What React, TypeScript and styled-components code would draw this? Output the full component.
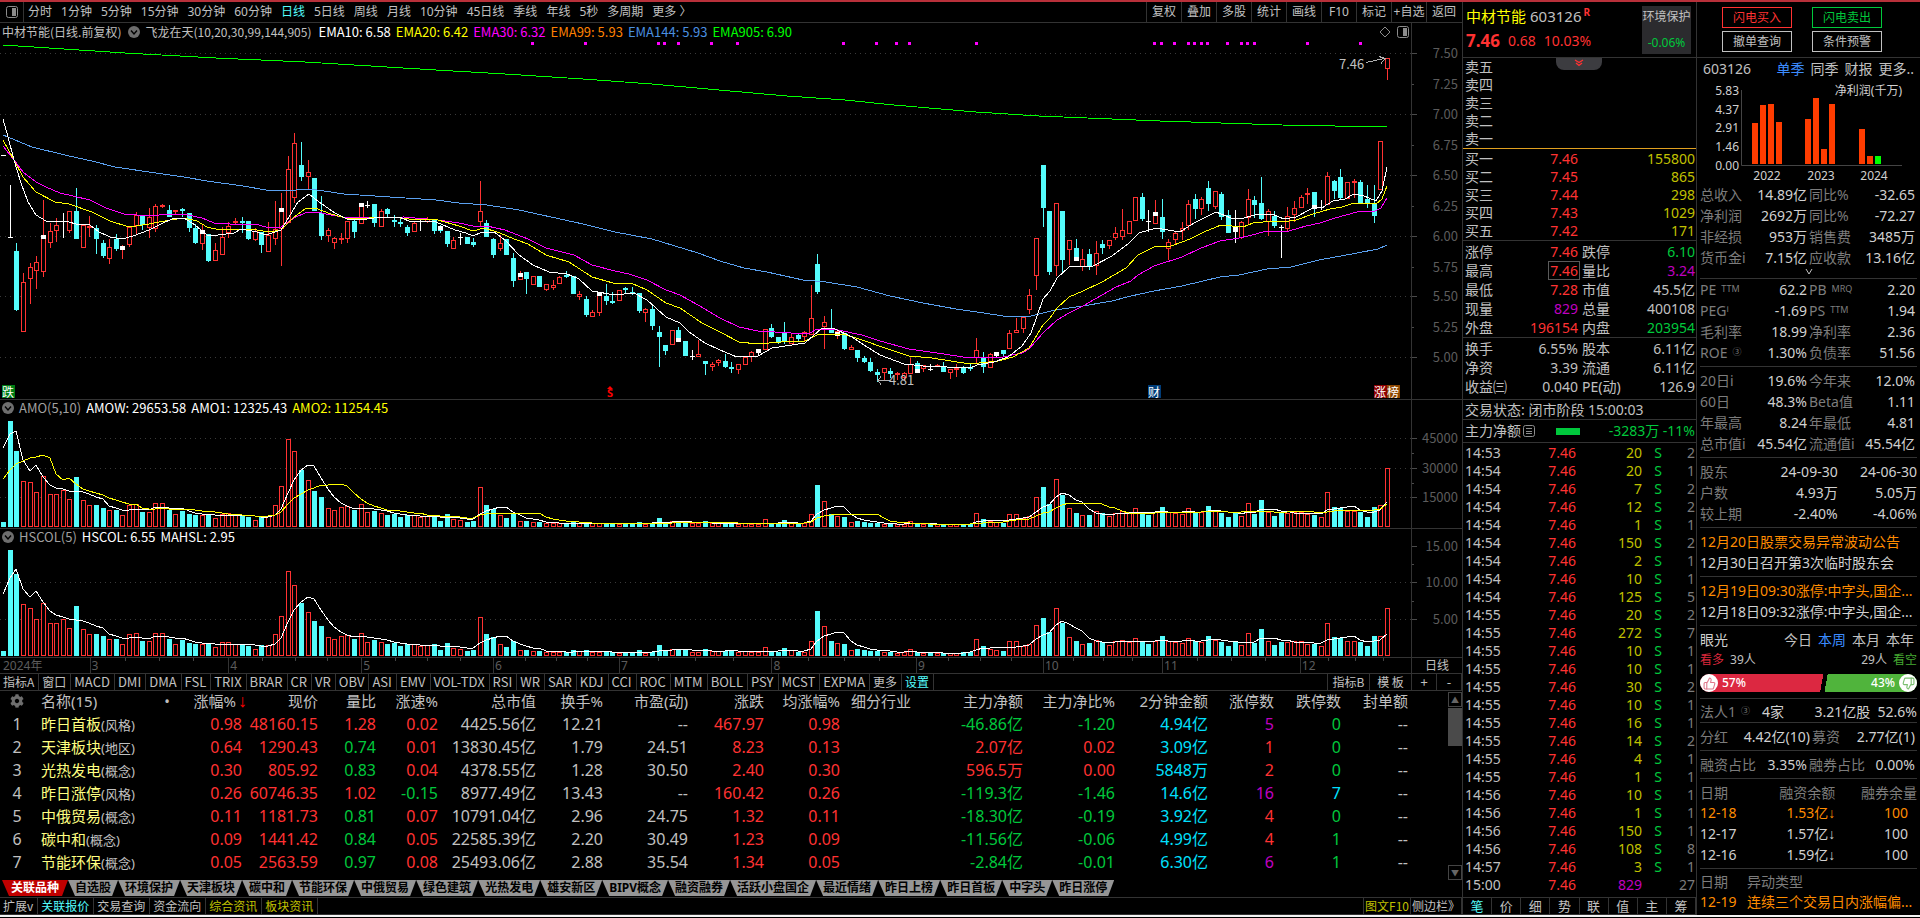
import React from "react";
import styled, { createGlobalStyle, css } from "styled-components";
import { FaCog } from "react-icons/fa";
import { ThumbsUp, ThumbsDown } from "lucide-react";

/* ---------- theme ---------- */

const C = {
  line: "#333333",
  text: "#c0c0c0",
  dim: "#7c7c7c",
  axis: "#5c5c5c",
  red: "#ff3232",
  green: "#00c83c",
  cyan: "#54fcfc",
  sky: "#00e0ff",
  olive: "#c0c000",
  yellow: "#ffff00",
  pale: "#ffff80",
  purple: "#c000c0",
  orange: "#ff8c00",
  blue: "#3c8cff",
  white: "#ffffff",
};
type Tone = keyof typeof C;

const sans = `"Noto Sans", "Noto Sans CJK SC", sans-serif`;
const narrow = `"Noto Sans CJK SC", "Noto Sans", sans-serif`;

const Global = createGlobalStyle`
  * { box-sizing: border-box; }
  body { margin: 0; background: #000; color: ${C.text}; font: 14px/18px ${sans}; }
  button { font: inherit; color: inherit; background: none; border: 0; padding: 0; cursor: pointer; white-space: nowrap; }
  a { color: inherit; text-decoration: none; }
  table { border-collapse: collapse; border-spacing: 0; }
  th { font-weight: 400; }
  td, th { padding: 0; white-space: nowrap; }
`;

/* ---------- chart data ---------- */

const PLOT_W = 1411;
const barX = (i: number) => Math.round(3.2 + 6.62 * i);

type Candle = { kind: string; high: number; top: number; bottom: number; low: number };

// kind, high, body top, body bottom, low (in plot rows); W / w are flat days closing up / down
const CANDLES: Candle[] = `
w 155 155 156 155|w 185 237 238 237|c 243 251 310 311|r 273 282 332 332|r 263 267 279 304|r 256 262 271 289|r 200 237 272 277|r 223 231 243 248|r 218 225 231 242|W 213 221 222 238
r 211 211 231 233|c 188 211 239 239|r 225 225 248 248|r 216 226 228 237|c 225 228 239 254|c 240 243 256 258|r 239 247 259 264|c 234 239 249 251|r 245 247 250 259|r 226 227 245 247
r 212 215 226 235|c 215 216 225 230|r 208 217 228 238|r 204 206 229 232|r 204 205 207 208|c 205 210 217 217|r 210 210 212 214|c 208 209 211 217|c 213 213 228 232|c 224 228 243 244
r 224 232 244 250|c 234 234 261 262|r 243 250 261 261|r 227 237 255 255|r 222 226 233 238|r 218 221 223 225|c 217 221 223 233|c 221 221 239 240|r 228 231 240 241|c 232 232 245 253
r 222 235 252 252|r 201 229 239 245|r 193 210 229 266|r 156 169 223 223|r 133 143 198 203|c 142 165 177 181|r 160 172 177 189|c 178 178 211 211|c 196 213 236 240|r 228 230 236 242
r 237 238 243 249|r 233 238 240 244|r 221 221 239 243|c 218 221 232 238|r 204 206 224 224|W 201 205 206 208|c 204 204 223 227|r 209 211 227 227|c 208 209 214 218|c 215 220 222 227
c 217 222 224 227|c 225 227 233 236|r 222 223 232 232|W 220 221 222 231|r 217 219 222 223|c 219 219 231 234|c 225 227 231 233|c 231 231 244 247|r 237 240 249 249|W 233 237 238 245
c 237 237 244 244|c 238 242 245 247|r 181 211 222 226|c 220 223 237 237|c 238 239 255 258|r 235 243 249 251|c 239 239 255 255|c 253 258 281 287|r 271 275 280 280|c 272 272 279 294
r 276 276 285 285|c 276 276 287 287|r 284 284 290 291|r 280 285 288 290|r 276 277 284 284|c 271 275 277 278|c 276 276 294 294|r 291 294 297 300|c 296 299 315 317|r 310 312 317 317
r 292 294 313 316|c 284 296 301 305|c 292 301 303 304|r 290 290 301 301|c 287 288 290 294|c 287 292 294 295|c 293 293 311 313|r 308 309 313 322|c 304 309 326 330|c 326 332 337 367
c 345 345 351 355|r 330 330 345 345|c 327 330 340 342|c 341 341 356 356|W 350 356 357 360|r 340 354 357 357|c 361 361 364 375|r 362 364 367 371|r 359 360 363 366|c 354 361 367 368
c 362 367 369 373|r 364 364 370 374|r 357 357 365 365|r 351 352 357 362|W 349 350 353 355|r 329 329 350 350|c 324 328 337 338|c 337 337 342 344|c 322 332 341 344|r 333 337 344 344
c 334 335 339 342|r 331 332 337 342|r 285 318 335 335|c 254 264 292 294|r 316 322 327 349|c 309 329 333 333|r 329 331 335 339|c 333 333 349 350|r 345 347 350 350|c 350 350 358 362
c 356 358 362 363|c 358 362 371 372|c 369 372 375 382|r 368 368 373 380|c 368 371 374 378|r 372 373 375 380|r 372 373 378 380|r 358 364 374 374|c 361 363 372 373|r 365 365 369 372
w 364 369 370 371|r 364 365 367 367|c 362 367 372 372|r 369 369 373 379|r 364 368 370 377|c 366 368 373 374|c 364 367 369 371|r 338 350 358 364|c 352 357 367 373|r 353 354 368 368
W 352 353 355 357|c 350 350 354 357|r 330 333 349 349|r 318 330 333 333|r 316 317 329 333|r 289 295 310 314|r 238 238 276 290|c 165 165 208 227|c 211 211 272 275|r 203 203 266 276
c 211 211 260 273|r 240 240 250 265|c 239 248 260 260|r 249 259 267 271|c 249 254 266 270|r 241 253 266 275|c 240 244 248 254|r 240 240 246 249|r 227 233 238 240|r 209 230 237 240
r 221 221 234 234|r 197 197 221 221|c 193 197 219 221|w 210 221 222 232|r 200 212 224 224|c 199 217 232 239|r 239 242 249 260|r 232 233 240 244|r 222 228 231 240|r 200 204 226 230
c 194 199 209 219|r 197 199 209 215|c 181 188 204 211|r 191 191 207 209|c 192 194 217 220|c 210 215 233 233|w 210 227 232 243|r 221 222 238 239|r 189 199 218 225|c 196 200 205 218
c 177 203 219 220|r 209 211 222 236|c 211 216 226 228|w 225 227 228 258|r 207 216 229 231|r 201 208 215 222|r 195 197 208 208|r 188 193 195 204|c 192 192 208 217|W 200 207 208 210
r 172 176 205 205|c 180 181 191 199|c 169 177 198 199|r 182 182 199 199|r 179 181 183 198|c 180 182 203 203|c 185 199 203 208|c 185 204 216 223|r 141 141 190 190|r 58 58 69 80`
  .trim()
  .split(/[|\n]/)
  .map((row) => {
    const [kind, ...v] = row.split(" ");
    const [high, top, bottom, low] = v.map(Number);
    return { kind, high, top, bottom, low };
  });

// white close markers: bar index, row
const MARKS: [number, number][] = [
  [6, 237], [18, 248], [30, 232], [42, 210], [54, 205], [66, 228], [78, 275], [90, 294], [102, 340], [114, 351],
  [126, 334], [138, 371], [150, 354], [162, 259], [174, 214], [186, 229], [198, 207],
];

const SIGNALS = [
  532, 585, 658, 664, 678, 711, 737, 843, 876, 896, 909, 976, 1154, 1161, 1174, 1188, 1194, 1201, 1207, 1227, 1241,
  1247, 1254, 1307, 1360,
];

// turnover amount, thirds of a plot row
const AMOUNT = `
15 318 228 138 135 104 152 98 98 111 84 150 80 65 65 57 50 51 35 66 70 45 44 71 71 51 38 48 39 36 36 36 26 40 42 37 35 30 21 31
32 65 122 263 227 171 140 108 90 56 50 59 62 50 69 44 48 41 36 39 30 35 36 30 32 35 17 39 24 20 15 18 119 66 54 36 27 42 17 18
14 15 12 11 11 11 17 13 15 11 11 11 11 9 11 11 15 8 11 27 15 17 15 15 11 11 18 11 11 13 14 9 11 10 10 23 11 11 21 15
9 11 38 126 77 38 33 30 14 18 15 12 13 9 10 8 10 17 9 8 9 8 8 8 8 9 10 41 24 17 14 12 38 38 27 32 89 120 69 143
96 56 42 35 36 47 42 32 43 48 41 56 44 35 44 60 44 42 38 56 45 44 63 50 42 30 43 32 71 39 81 44 33 43 43 45 45 38 36 30
104 60 56 48 48 45 30 60 65 176`
  .trim()
  .split(/\s+/)
  .map((n) => Number(n) / 3);

const TURNOVER = AMOUNT.map((a, i) => {
  const { top, bottom } = CANDLES[i];
  const price = 7.5 - ((top + bottom) / 2 - 53) / 121.6;
  return Math.min(106, (a * 6.1) / price);
});

const movingAverage = (values: number[], before: number[], span: number) => {
  const all = [...before, ...values];
  return values.map((_, i) => {
    const end = i + before.length + 1;
    return all.slice(end - span, end).reduce((s, v) => s + v, 0) / span;
  });
};

const LINES: { color: string; points: string }[] = [
  {
    color: "#00ff00",
    points:
      "3,45 125,53 216,58 305,62 436,70 505,74 583,79 652,84 719,90 787,96 845,100 894,105 976,112 1039,116 1160,121 1282,125 1387,127",
  },
  {
    color: "#5aa0f0",
    points:
      "3,135 32,147 69,156 92,161 115,167 156,173 184,177 207,181 243,186 266,190 287,191 305,189 317,190 344,194 390,197 436,200 459,203 487,205 519,210 551,217 583,224 615,232 652,239 675,246 698,253 720,261 744,268 767,272 803,280 826,282 857,287 890,296 923,303 956,309 984,313 1003,316 1031,316 1055,310 1083,306 1112,301 1131,296 1154,291 1182,286 1220,277 1239,275 1267,269 1291,267 1319,260 1352,254 1378,249 1387,245",
  },
  {
    color: "#ff00ff",
    points:
      "3,146 14,160 23,172 36,182 46,187 60,193 90,200 106,208 124,214 149,216 170,214 188,215 202,218 214,223 230,224 255,224 266,227 281,227 294,218 305,213 317,212 331,215 349,218 404,217 438,220 459,223 473,226 487,226 505,230 528,239 546,248 574,255 592,265 615,271 629,274 647,280 666,290 680,295 698,305 720,318 739,327 758,331 791,333 810,333 817,329 838,330 862,335 880,341 909,349 937,353 970,358 1003,357 1022,353 1029,349 1043,333 1057,320 1069,313 1083,306 1102,295 1116,287 1131,281 1138,275 1154,266 1182,257 1201,248 1220,241 1239,238 1248,236 1267,231 1289,231 1306,226 1320,223 1335,218 1357,212 1375,211 1381,208 1387,198",
  },
  {
    color: "#ffff00",
    points:
      "3,140 14,160 23,177 36,192 55,202 69,204 92,212 110,221 129,227 149,224 170,220 184,218 197,221 207,227 220,230 239,229 257,230 269,232 281,230 294,217 305,209 315,208 331,214 349,219 390,217 409,219 438,220 459,226 473,231 484,228 500,233 514,239 528,244 546,255 569,262 592,277 613,283 631,283 647,290 666,303 680,308 702,323 720,332 739,342 758,344 781,342 805,341 819,334 843,334 862,340 885,348 909,356 932,358 970,364 998,361 1013,357 1029,348 1043,325 1050,318 1057,308 1069,297 1083,291 1102,282 1126,268 1138,255 1154,247 1171,246 1182,242 1190,239 1204,232 1221,225 1243,227 1253,223 1274,221 1282,222 1296,220 1313,214 1330,209 1342,207 1354,203 1376,204 1382,199 1387,186",
  },
  {
    color: "#ffffff",
    points:
      "3,119 7,133 14,160 21,183 28,202 36,215 46,221 69,222 76,224 90,225 99,232 110,237 122,239 133,236 149,230 161,224 172,219 184,218 195,225 207,235 218,235 234,233 241,229 257,232 266,235 281,230 289,217 298,202 309,194 319,202 335,213 347,219 360,220 381,217 399,217 409,221 436,222 455,230 466,233 473,236 482,232 494,232 505,240 519,255 533,265 549,272 567,274 579,279 592,291 615,295 634,293 647,300 666,317 680,323 689,332 705,343 720,350 737,357 758,356 772,348 805,343 821,329 833,328 852,337 864,345 880,355 904,364 923,366 970,368 977,365 994,362 1008,357 1022,346 1031,333 1043,299 1050,291 1057,278 1069,267 1093,266 1112,256 1128,244 1139,233 1156,228 1180,232 1194,223 1216,212 1231,218 1240,219 1255,215 1272,214 1284,219 1296,217 1311,209 1323,207 1333,201 1345,199 1354,194 1364,196 1376,201 1382,191 1387,167",
  },
];

/* ---------- page frame ---------- */

const Page = styled.div`
  display: flex;
  flex-direction: column;
  border-top: 2px solid #b8303a;
  border-bottom: 2px solid #f4f4f4;
`;

const Columns = styled.main`
  display: grid;
  grid-template-columns: minmax(0, 1fr) 234px 224px;
`;

const Left = styled.section`
  min-width: 0;
  display: flex;
  flex-direction: column;
`;

/* ---------- period toolbar ---------- */

const Toolbar = styled.nav`
  display: flex;
  height: 21px;
  border-bottom: 1px solid ${C.line};
  padding-right: 1px;
  font-size: 12px;
  line-height: 20px;
`;

const PanelToggle = styled.button`
  display: flex;
  align-items: center;
  justify-content: center;
  width: 24px;
  border-right: 1px solid ${C.line};
`;

const Periods = styled.div`
  flex: 1;
  min-width: 0;
  display: flex;
  gap: 9px;
  padding-left: 4px;
  overflow: hidden;
`;

const TextButton = styled.button<{ $tone?: Tone }>`
  color: ${(p) => C[p.$tone ?? "text"]};
`;

const ToolCell = styled.button`
  width: 35px;
  border-left: 1px solid ${C.line};
`;

/* ---------- chart panes ---------- */

const Pane = styled.section<{ $h: number }>`
  display: grid;
  grid-template-columns: minmax(0, 1fr) 51px;
  height: ${(p) => p.$h}px;
  border-bottom: 1px solid ${C.line};
`;

const PaneBody = styled.div`
  min-width: 0;
  display: flex;
  flex-direction: column;
`;

const PaneTitle = styled.header<{ $h: number }>`
  display: flex;
  align-items: center;
  gap: 5px;
  height: ${(p) => p.$h}px;
  padding: 0 2px;
  font: 13px/16px ${narrow};
  white-space: nowrap;
`;

const Caption = styled.span`
  font-size: 12px;
  margin-right: 2px;
`;

const Value = styled.span<{ $color: string }>`
  color: ${(p) => p.$color};
`;

const TitleTools = styled.span`
  display: flex;
  align-items: center;
  gap: 6px;
  margin-left: auto;
`;

const Plot = styled.div`
  position: relative;
  flex: 1;
  min-height: 0;
`;

const PlotSvg = styled.svg`
  display: block;
  width: 100%;
  height: 100%;
  shape-rendering: crispEdges;
`;

const AxisBox = styled.div`
  border-left: 1px solid ${C.line};
`;

const AxisSvg = styled.svg`
  display: block;
  font: 13px ${narrow};
  fill: ${C.axis};
`;

const PriceTag = styled.span<{ $x: number; $y: number }>`
  position: absolute;
  left: ${(p) => (p.$x / PLOT_W) * 100}%;
  top: ${(p) => p.$y}px;
  font: 13px/16px ${narrow};
`;

const Badge = styled.span<{ $x: number; $bg: string }>`
  position: absolute;
  left: ${(p) => (p.$x / PLOT_W) * 100}%;
  bottom: 1px;
  width: 13px;
  height: 13px;
  background: ${(p) => p.$bg};
  color: #fff;
  font: 12px/13px ${narrow};
`;

const DollarMark = styled.span`
  position: absolute;
  left: ${(607 / PLOT_W) * 100}%;
  bottom: 0;
  color: #ff0000;
  font: 700 11px/12px ${sans};
  &::before {
    content: "";
    display: block;
    width: 0;
    margin: 0 auto -2px;
    border: 3px solid transparent;
    border-top: 0;
    border-bottom-color: #ff0000;
  }
`;

const PanelIcon = () => (
  <svg width="12" height="12" viewBox="0 0 12 12" aria-hidden="true">
    <rect x="0.5" y="0.5" width="11" height="11" rx="2" fill="none" stroke="#8c8c8c" />
    <rect x="6" y="2" width="4" height="8" fill="#8c8c8c" />
  </svg>
);

const ChevronDisc = () => (
  <svg width="12" height="12" viewBox="0 0 12 12" aria-hidden="true">
    <circle cx="6" cy="6" r="6" fill="#6e6e6e" />
    <path d="M3 4.5 6 8l3-3.5" fill="none" stroke="#000" strokeWidth="1.4" />
  </svg>
);

const Grid = ({ rows }: { rows: number[] }) => (
  <g stroke="#3a3a3a" strokeDasharray="1 4">
    {rows.map((y) => (
      <line key={y} x1="0" x2={PLOT_W} y1={y + 0.5} y2={y + 0.5} />
    ))}
  </g>
);

const CandlePlot = () => (
  <PlotSvg viewBox={`0 41 ${PLOT_W} 358`} preserveAspectRatio="none" role="img" aria-label="日线">
    <Grid rows={[53, 114, 175, 236, 296, 357]} />
    <g fill="#ff00ff">
      {SIGNALS.map((x) => (
        <rect key={x} x={x - 1} y="42" width="3" height="3" />
      ))}
    </g>
    {CANDLES.map(({ kind, high, top, bottom, low }, i) => {
      const x = barX(i);
      const color = kind === "r" ? C.red : kind === "c" ? C.cyan : C.white;
      return (
        <g key={i} fill={color}>
          <rect x={x} y={high} width="1" height={Math.max(1, low - high)} />
          {kind === "r" && bottom - top > 2 ? (
            <rect x={x - 1.5} y={top + 0.5} width="4" height={bottom - top - 1} fill="#000" stroke={color} />
          ) : (
            <rect x={x - 2} y={top} width="5" height={bottom - top} />
          )}
        </g>
      );
    })}
    <g fill="#ffffff">
      {MARKS.map(([i, y]) => (
        <rect key={i} x={barX(i) - 2} y={y - 2} width="5" height="4" />
      ))}
    </g>
    {LINES.map((l) => (
      <polyline key={l.color} points={l.points} fill="none" stroke={l.color} />
    ))}
    <g fill="none" stroke="#b0b0b0">
      <path d="M1366 62.5 1384 58.5M1379 56.5l6 2-4 5" />
      <path d="M890 380.5h-12M881 376.5l-3 4 3 4" />
    </g>
  </PlotSvg>
);

type BarPlotProps = { values: number[]; grid: number[]; averages: { color: string; values: number[] }[] };

const BarPlot = ({ values, grid, averages }: BarPlotProps) => (
  <PlotSvg viewBox={`0 0 ${PLOT_W} 112`} preserveAspectRatio="none" aria-hidden="true">
    <Grid rows={grid} />
    {values.map((v, i) => {
      const h = Math.max(2, Math.round(v));
      const x = barX(i);
      return CANDLES[i].kind === "r" || CANDLES[i].kind === "W" ? (
        <rect key={i} x={x - 1.5} y={111.5 - h} width="4" height={h - 1} fill="#000" stroke={C.red} />
      ) : (
        <rect key={i} x={x - 2} y={111 - h} width="5" height={h} fill={C.cyan} />
      );
    })}
    {averages.map((a) => (
      <polyline
        key={a.color}
        points={a.values.map((v, i) => `${barX(i)},${Math.round(111 - v)}`).join(" ")}
        fill="none"
        stroke={a.color}
      />
    ))}
  </PlotSvg>
);

const Axis = ({ height, labels, minor }: { height: number; labels: [number, string, boolean?][]; minor: number[] }) => (
  <AxisBox>
    <AxisSvg width="49" height={height}>
      {labels.map(([y, t, short]) => (
        <g key={t}>
          <rect x="0" y={y} width={short ? 2 : 5} height="1" fill="#4a4a4a" />
          <text x="46" y={y + 5} textAnchor="end">
            {t}
          </text>
        </g>
      ))}
      {minor.map((y) => (
        <rect key={y} x="0" y={y} width="2" height="1" fill="#4a4a4a" />
      ))}
    </AxisSvg>
  </AxisBox>
);

const DateRow = styled.div`
  display: grid;
  grid-template-columns: minmax(0, 1fr) 51px;
  height: 16px;
  border-bottom: 1px solid ${C.line};
  font: 12px/15px ${sans};
`;

const Months = styled.div`
  display: flex;
  color: ${C.axis};
`;

const Month = styled.span<{ $w: number; $first: boolean }>`
  flex: ${(p) => p.$w} 0 0;
  padding-left: ${(p) => (p.$first ? 3 : 1)}px;
  ${(p) =>
    !p.$first &&
    css`
      border-left: 1px solid ${C.line};
      background: linear-gradient(#444, #444) 25% 0 / 1px 3px no-repeat,
        linear-gradient(#444, #444) 50% 0 / 1px 3px no-repeat, linear-gradient(#444, #444) 75% 0 / 1px 3px no-repeat;
    `}
`;

const PeriodCell = styled.span`
  border-left: 1px solid ${C.line};
  text-align: center;
`;

/* ---------- indicator tabs ---------- */

const TabStrip = styled.nav`
  display: flex;
  border-bottom: 1px solid ${C.line};
`;

const IndicatorTab = styled.button<{ $han?: boolean; $tone?: Tone; $w?: number }>`
  padding: 0 4px 0 3px;
  height: 16px;
  border-right: 1px solid ${C.line};
  font: ${(p) => (p.$han ? 12 : 13)}px/16px ${narrow};
  color: ${(p) => C[p.$tone ?? "text"]};
  ${(p) => p.$w && `width: ${p.$w}px; padding: 0;`}
`;

const Spacer = styled.span`
  flex: 1;
  border-right: 1px solid ${C.line};
`;

/* ---------- related sectors table ---------- */

const TableArea = styled.div`
  flex: 1;
  display: grid;
  grid-template-columns: minmax(0, 1fr) 14px;
  padding-bottom: 5px;
`;

const SectorTable = styled.table`
  width: 100%;
  table-layout: fixed;
  font-size: 16px;
  line-height: 20px;
  align-self: start;
  tr {
    height: 23px;
    vertical-align: top;
  }
`;

const Head = styled.th<{ $left?: number }>`
  text-align: ${(p) => (p.$left ? "left" : "right")};
  font-size: 15px;
  padding-left: ${(p) => p.$left ?? 0}px;
`;

const Cell = styled.td<{ $tone?: Tone }>`
  text-align: right;
  color: ${(p) => C[p.$tone ?? "text"]};
`;

const IndexCell = styled.td`
  text-align: center;
`;

const IndexHead = styled.th`
  padding-top: 3px;
  font-size: 14px;
  color: #6e6e6e;
  svg {
    display: block;
    margin: 0 auto;
  }
`;

const NameCell = styled.td`
  padding-left: 7px;
  font-size: 15px;
  color: ${C.pale};
  small {
    font-size: 13px;
    color: ${C.text};
  }
`;

const NameHead = styled.span`
  display: flex;
  justify-content: space-between;
  padding-right: 12px;
`;

const DownArrow = styled.span`
  font-family: "Liberation Sans", "DejaVu Sans", sans-serif;
  line-height: 1;
`;

const SortArrow = styled(DownArrow)`
  display: inline-block;
  width: 11px;
  margin-right: -5px;
  font-size: 18px;
  color: #ff0000;
`;

const ScrollTrack = styled.div`
  display: flex;
  flex-direction: column;
  padding: 1px 0 0;
`;

const ScrollButton = styled.button<{ $last?: boolean }>`
  height: 15px;
  border: 1px solid #444;
  color: #666;
  font-size: 8px;
  line-height: 12px;
  ${(p) => p.$last && "margin-top: auto; margin-bottom: -5px;"}
`;

const ScrollThumb = styled.div`
  height: 38px;
  margin-top: 1px;
  background: #4a4a4a;
`;

const SectorTabs = styled.nav`
  display: flex;
  height: 16px;
  margin-bottom: 1px;
  padding-left: 2px;
`;

const SectorTab = styled.button<{ $active?: boolean }>`
  padding: 0 ${(p) => (p.$active ? 9 : 7)}px;
  font: 700 12px/16px ${sans};
  background: ${(p) => (p.$active ? "#c00000" : "#969696")};
  color: ${(p) => (p.$active ? "#fff" : "#000")};
  clip-path: polygon(0 0, 100% 0, calc(100% - 6px) 100%, 7px 100%);
`;

const FootBar = styled.nav`
  display: flex;
  height: 18px;
  border-top: 1px solid ${C.line};
  border-bottom: 1px solid ${C.line};
`;

const FootCell = styled.button<{ $tone?: Tone; $tight?: boolean }>`
  padding: ${(p) => (p.$tight ? "0 1px" : "0 4px 0 3px")};
  border-right: 1px solid ${C.line};
  font: 12px/16px ${narrow};
  color: ${(p) => C[p.$tone ?? "text"]};
`;

const FootSpacer = styled.span`
  flex: 1;
  border-right: 1px solid ${C.line};
`;

const COLUMNS: [string, number][] = [
  ["", 34], ["名称(15)", 148], ["涨幅%", 60], ["现价", 76], ["量比", 58], ["涨速%", 62], ["总市值", 98], ["换手%", 67],
  ["市盈(动)", 85], ["涨跌", 76], ["均涨幅%", 76], ["细分行业", 85], ["主力净额", 98], ["主力净比%", 92],
  ["2分钟金额", 93], ["涨停数", 66], ["跌停数", 67], ["封单额", 67], ["pad", 40],
];

// name, kind, then the numeric columns; the tone letters colour those columns in order
const SECTORS: [string, string, string[], string][] = [
  ["昨日首板", "风格", ["0.98", "48160.15", "1.28", "0.02", "4425.56亿", "12.21", "--", "467.97", "0.98", "", "-46.86亿", "-1.20", "4.94亿", "5", "0", "--"], "rrrrtttrrtggspgt"],
  ["天津板块", "地区", ["0.64", "1290.43", "0.74", "0.01", "13830.45亿", "1.79", "24.51", "8.23", "0.13", "", "2.07亿", "0.02", "3.09亿", "1", "0", "--"], "rrgrtttrrtrrsrgt"],
  ["光热发电", "概念", ["0.30", "805.92", "0.83", "0.04", "4378.55亿", "1.28", "30.50", "2.40", "0.30", "", "596.5万", "0.00", "5848万", "2", "0", "--"], "rrgrtttrrtrrsrgt"],
  ["昨日涨停", "风格", ["0.26", "60746.35", "1.02", "-0.15", "8977.49亿", "13.43", "--", "160.42", "0.26", "", "-119.3亿", "-1.46", "14.6亿", "16", "7", "--"], "rrrgtttrrtggspst"],
  ["中俄贸易", "概念", ["0.11", "1181.73", "0.81", "0.07", "10791.04亿", "2.96", "24.75", "1.32", "0.11", "", "-18.30亿", "-0.19", "3.92亿", "4", "0", "--"], "rrgrtttrrtggsrgt"],
  ["碳中和", "概念", ["0.09", "1441.42", "0.84", "0.05", "22585.39亿", "2.20", "30.49", "1.23", "0.09", "", "-11.56亿", "-0.06", "4.99亿", "4", "1", "--"], "rrgrtttrrtggsrgt"],
  ["节能环保", "概念", ["0.05", "2563.59", "0.97", "0.08", "25493.06亿", "2.88", "35.54", "1.34", "0.05", "", "-2.84亿", "-0.01", "6.30亿", "6", "1", "--"], "rrgrtttrrtggspgt"],
];
const TONES: Record<string, Tone> = { r: "red", g: "green", t: "text", s: "sky", p: "purple" };

/* ---------- quote column ---------- */

const Quote = styled.section`
  border-left: 1px solid ${C.line};
  display: flex;
  flex-direction: column;
`;

const QuoteHead = styled.header`
  position: relative;
  display: flex;
  justify-content: space-between;
  height: 56px;
  padding: 4px 5px 3px 3px;
  border-bottom: 1px solid ${C.line};
`;

const QuoteName = styled.div`
  font-size: 15px;
  line-height: 20px;
  color: ${C.text};
  b {
    font-weight: 400;
    color: ${C.yellow};
    margin-right: 4px;
  }
  sup {
    font: 700 10px/10px ${sans};
    color: ${C.red};
    margin-left: 2px;
  }
`;

const QuotePrice = styled.div`
  display: flex;
  align-items: center;
  gap: 8px;
  margin-top: 5px;
  line-height: 20px;
  color: ${C.red};
  strong {
    font-size: 17px;
  }
`;

const IndustryBox = styled.a`
  display: flex;
  flex-direction: column;
  justify-content: space-between;
  width: 49px;
  height: 48px;
  padding: 2px 0;
  background: #2b2b2e;
  font: 12px/18px ${sans};
  text-align: center;
  white-space: nowrap;
  span {
    color: ${C.green};
  }
`;

const Handle = styled.button`
  position: absolute;
  top: 56px;
  left: 93px;
  width: 46px;
  height: 12px;
  display: flex;
  justify-content: center;
  background: #3c3c40;
  border-radius: 0 0 8px 8px;
`;

const QuoteBlock = styled.div<{ $edge?: string; $rowH: number; $pad?: string }>`
  display: grid;
  grid-template-columns: 113px 1fr;
  grid-auto-rows: ${(p) => p.$rowH}px;
  line-height: ${(p) => p.$rowH}px;
  column-gap: 4px;
  padding: ${(p) => p.$pad ?? "1px 0 0"};
  padding-left: 2px;
  border-bottom: 1px solid ${(p) => p.$edge ?? C.line};
`;

const Pair = styled.div<{ $tone?: Tone }>`
  display: flex;
  justify-content: space-between;
  white-space: nowrap;
  span:last-child:not(:first-child) {
    color: ${(p) => C[p.$tone ?? "text"]};
  }
`;

const Amount = styled.span`
  text-align: right;
  color: ${C.olive};
`;

const Boxed = styled.span`
  outline: 1px solid #5a5a5a;
  outline-offset: -1px;
  margin-right: -2px;
  padding: 0 2px;
  color: ${C.red};
`;

const StatusRow = styled.div<{ $h: number }>`
  display: flex;
  align-items: center;
  height: ${(p) => p.$h}px;
  padding: 0 1px 0 2px;
  border-bottom: 1px solid ${C.line};
  white-space: nowrap;
`;

const FlowBar = styled.span`
  width: 24px;
  height: 7px;
  margin-left: 21px;
  background: ${C.green};
`;

const FlowText = styled.span`
  margin-left: auto;
  color: ${C.green};
`;

const TickTable = styled.table`
  width: 100%;
  margin-top: 1px;
  line-height: 18px;
  td {
    height: 18px;
    text-align: right;
  }
`;

const TickCell = styled.td<{ $tone?: Tone; $w?: number }>`
  color: ${(p) => C[p.$tone ?? "text"]};
  ${(p) => p.$w && `width: ${p.$w}px;`}
  &&:first-child {
    padding-left: 2px;
    text-align: left;
  }
  &:last-child {
    padding-right: 1px;
  }
`;

const QuoteTabs = styled.nav`
  display: grid;
  grid-template-columns: repeat(8, 1fr);
  height: 18px;
  margin-top: auto;
  border-top: 1px solid ${C.line};
  border-bottom: 1px solid ${C.line};
`;

const QuoteTab = styled.button<{ $active?: boolean }>`
  border-right: 1px solid ${C.line};
  font: 13px/16px ${narrow};
  color: ${(p) => (p.$active ? C.cyan : C.text)};
`;

const TICKS: [string, string, string][] = [
  ["14:53", "20", "2"], ["14:54", "20", "1"], ["14:54", "7", "2"], ["14:54", "12", "2"], ["14:54", "1", "1"],
  ["14:54", "150", "2"], ["14:54", "2", "1"], ["14:54", "10", "1"], ["14:54", "125", "5"], ["14:55", "20", "2"],
  ["14:55", "272", "7"], ["14:55", "10", "1"], ["14:55", "10", "1"], ["14:55", "30", "2"], ["14:55", "10", "1"],
  ["14:55", "16", "1"], ["14:55", "14", "2"], ["14:55", "4", "1"], ["14:55", "1", "1"], ["14:56", "10", "1"],
  ["14:56", "1", "1"], ["14:56", "150", "1"], ["14:56", "108", "8"], ["14:57", "3", "1"], ["15:00", "829", "27"],
];

/* ---------- information column ---------- */

const Info = styled.aside`
  border-left: 1px solid ${C.line};
  min-width: 0;
`;

const TradeButtons = styled.div`
  display: grid;
  grid-template-columns: 70px 70px;
  grid-auto-rows: 21px;
  gap: 3px 20px;
  height: 56px;
  padding: 5px 0 0 25px;
  border-bottom: 1px solid ${C.line};
`;

const TradeButton = styled.button<{ $tone: Tone }>`
  border: 1px solid ${(p) => C[p.$tone]};
  color: ${(p) => C[p.$tone]};
  font: 12px/18px ${sans};
`;

const InfoTabs = styled.div`
  display: flex;
  gap: 6px;
  height: 22px;
  padding: 0 6px 0 6px;
  line-height: 22px;
  span {
    margin-right: auto;
  }
`;

const ProfitSvg = styled.svg`
  display: block;
  font: 12px ${sans};
  fill: #d0d0d0;
`;

const InfoBlock = styled.div<{ $pad: string }>`
  margin: 0 3px;
  padding: ${(p) => p.$pad};
  border-bottom: 1px solid ${C.line};
`;

const InfoRow = styled.div<{ $cols?: string }>`
  display: grid;
  grid-template-columns: ${(p) => p.$cols ?? "107px 106px"};
  column-gap: 2px;
  line-height: 21px;
  white-space: nowrap;
  color: #d0d0d0;
`;

const Item = styled.div`
  display: flex;
  justify-content: space-between;
  white-space: nowrap;
`;

const Label = styled.span`
  color: ${C.dim};
  sup {
    font-size: 9px;
    line-height: 9px;
    margin-left: 5px;
    vertical-align: 3px;
  }
`;

const More = styled.button`
  display: flex;
  justify-content: center;
  width: 100%;
  height: 10px;
`;

const InfoTable = styled.table`
  width: 100%;
  line-height: 21px;
  color: #d0d0d0;
  td,
  th {
    text-align: right;
  }
  td:first-child,
  th:first-child {
    text-align: left;
    color: ${C.dim};
  }
`;

const MarginTable = styled.table`
  width: 100%;
  line-height: 21px;
  color: #d0d0d0;
  th {
    color: ${C.dim};
    line-height: 19px;
  }
  td,
  th {
    text-align: right;
  }
  td:first-child,
  th:first-child {
    text-align: left;
  }
  td:last-child {
    padding-right: 9px;
  }
`;

const MarginRow = styled.tr<{ $hot?: boolean }>`
  ${(p) => p.$hot && `color: ${C.orange};`}
`;

const News = styled.a<{ $hot?: boolean }>`
  display: block;
  line-height: 21px;
  overflow: hidden;
  text-overflow: ellipsis;
  white-space: nowrap;
  color: ${(p) => (p.$hot ? C.orange : "#d0d0d0")};
`;

const Outlook = styled.div`
  display: flex;
  gap: 6px;
  padding-right: 3px;
  line-height: 21px;
  color: #d0d0d0;
  > span {
    margin-right: auto;
  }
`;

const Votes = styled.div`
  display: flex;
  justify-content: space-between;
  margin-bottom: 4px;
  font-size: 12px;
  line-height: 20px;
  b {
    font-weight: 400;
    margin-right: 6px;
    color: #dc283c;
  }
  i {
    font-style: normal;
    margin-left: 6px;
    color: #46aa32;
  }
`;

const VoteBar = styled.div`
  display: flex;
  justify-content: space-between;
  height: 18px;
  color: #fff;
  font: 500 12px/18px ${sans};
  border-radius: 9px;
  background: linear-gradient(100deg, #dc2841 56%, #000 56%, #000 58%, #50b43c 58%);
`;

const VoteSide = styled.span`
  display: flex;
  align-items: center;
  gap: 4px;
`;

const Thumb = styled.span<{ $color: string }>`
  display: flex;
  align-items: center;
  justify-content: center;
  width: 18px;
  height: 18px;
  border-radius: 50%;
  background: #fff;
  color: ${(p) => p.$color};
`;

const Events = styled.table`
  width: calc(100% - 6px);
  margin: 3px 3px 0;
  table-layout: fixed;
  line-height: 20px;
  th {
    color: ${C.dim};
    text-align: left;
  }
  th:first-child {
    width: 47px;
  }
  td {
    color: ${C.orange};
  }
`;

const PROFIT = [
  [56, 123, 0], [64, 105, 0], [72, 104, 0], [80, 122, 0],
  [109, 119, 0], [117, 98, 0], [125, 149, 0], [133, 104, 0],
  [163, 129, 0], [171, 156, 0], [179, 156, 1],
];

const ProfitChart = () => (
  <ProfitSvg width="223" height="104" viewBox="1 80 223 104" role="img" aria-label="净利润">
    {["5.83", "4.37", "2.91", "1.46", "0.00"].map((t, i) => (
      <text key={t} x="43" y={95 + Math.round(i * 18.7)} textAnchor="end">
        {t}
      </text>
    ))}
    <text x="206" y="95" textAnchor="end">
      净利润(千万)
    </text>
    <path d="M45.5 90v75.500H206" fill="none" stroke="#444" />
    {PROFIT.map(([x, y, up]) => (
      <rect key={x} x={x} y={y} width="6" height={164 - y} fill={up ? "#00ff00" : "#ff3c00"} />
    ))}
    {["2022", "2023", "2024"].map((t, i) => (
      <text key={t} x={71 + Math.round(i * 53.5)} y="180" textAnchor="middle">
        {t}
      </text>
    ))}
  </ProfitSvg>
);

const Facts = ({ rows }: { rows: [React.ReactNode, string, React.ReactNode, string][] }) => (
  <>
    {rows.map(([a, b, c, d], i) => (
      <InfoRow key={i}>
        <Item>
          <Label>{a}</Label>
          <span>{b}</span>
        </Item>
        <Item>
          <Label>{c}</Label>
          <span>{d}</span>
        </Item>
      </InfoRow>
    ))}
  </>
);

/* ---------- page ---------- */

const PERIODS = ["分时", "1分钟", "5分钟", "15分钟", "30分钟", "60分钟", "日线", "5日线", "周线", "月线", "10分钟", "45日线", "季线", "年线", "5秒", "多周期", "更多 〉"];
const TOOLS = ["复权", "叠加", "多股", "统计", "画线", "F10", "标记", "+自选", "返回"];
const INDICATORS = ["指标A", "窗口", "MACD", "DMI", "DMA", "FSL", "TRIX", "BRAR", "CR", "VR", "OBV", "ASI", "EMV", "VOL-TDX", "RSI", "WR", "SAR", "KDJ", "CCI", "ROC", "MTM", "BOLL", "PSY", "MCST", "EXPMA", "更多", "设置"];
const MONTHS: [string, number][] = [["2024年", 88], ["3", 139], ["4", 133], ["5", 132], ["6", 126], ["7", 153], ["8", 145], ["9", 127], ["10", 119], ["11", 138], ["12", 111]];
const RELATED = ["关联品种", "自选股", "环境保护", "天津板块", "碳中和", "节能环保", "中俄贸易", "绿色建筑", "光热发电", "雄安新区", "BIPV概念", "融资融券", "活跃小盘国企", "最近情绪", "昨日上榜", "昨日首板", "中字头", "昨日涨停"];
const MARGINS: [string, string][] = [["12-18", "1.53亿"], ["12-17", "1.57亿"], ["12-16", "1.59亿"]];
const isHan = (t: string) => /[\u4e00-\u9fff]/.test(t);

export default function App() {
  return (
    <Page>
      <Global />
      <Columns>
        <Left>
          <Toolbar>
            <PanelToggle aria-label="侧栏">
              <PanelIcon />
            </PanelToggle>
            <Periods>
              {PERIODS.map((p) => (
                <TextButton key={p} $tone={p === "日线" ? "cyan" : "text"}>
                  {p}
                </TextButton>
              ))}
            </Periods>
            {TOOLS.map((t) => (
              <ToolCell key={t}>{t}</ToolCell>
            ))}
          </Toolbar>

          <Pane $h={377}>
            <PaneBody>
              <PaneTitle $h={18}>
                <Caption>中材节能(日线.前复权)</Caption>
                <ChevronDisc />
                <Caption>飞龙在天(10,20,30,99,144,905)</Caption>
                <Value $color="#ffffff">EMA10: 6.58</Value>
                <Value $color="#ffff00">EMA20: 6.42</Value>
                <Value $color="#ff00ff">EMA30: 6.32</Value>
                <Value $color="#ff8000">EMA99: 5.93</Value>
                <Value $color="#4a90e0">EMA144: 5.93</Value>
                <Value $color="#00ff00">EMA905: 6.90</Value>
                <TitleTools>
                  <svg width="12" height="12" viewBox="0 0 12 12" aria-hidden="true">
                    <path d="M6 1l5 5-5 5-5-5z" fill="none" stroke="#8c8c8c" />
                  </svg>
                  <PanelIcon />
                </TitleTools>
              </PaneTitle>
              <Plot>
                <CandlePlot />
                <PriceTag $x={1339} $y={15}>7.46</PriceTag>
                <PriceTag $x={889} $y={331}>4.81</PriceTag>
                <Badge $x={2} $bg="#007d14">跌</Badge>
                <DollarMark>S</DollarMark>
                <Badge $x={1148} $bg="#003c78">财</Badge>
                <Badge $x={1374} $bg="#8c0000">涨</Badge>
                <Badge $x={1387} $bg="#8c4600">榜</Badge>
              </Plot>
            </PaneBody>
            <Axis
              height={376}
              labels={[[30, "7.50"], [61, "7.25", true], [91, "7.00"], [122, "6.75", true], [152, "6.50"], [183, "6.25", true], [213, "6.00"], [244, "5.75", true], [273, "5.50"], [304, "5.25", true], [334, "5.00"]]}
              minor={[]}
            />
          </Pane>

          <Pane $h={129}>
            <PaneBody>
              <PaneTitle $h={16}>
                <ChevronDisc />
                <Value $color="#a0a0a0">AMO(5,10)</Value>
                <Value $color="#ffffff">AMOW: 29653.58</Value>
                <Value $color="#ffffff">AMO1: 12325.43</Value>
                <Value $color="#ffff00">AMO2: 11254.45</Value>
              </PaneTitle>
              <Plot>
                <BarPlot
                  values={AMOUNT}
                  grid={[22, 52, 81]}
                  averages={[
                    { color: "#ffffff", values: movingAverage(AMOUNT, [38, 60, 190, 102], 5) },
                    { color: "#ffff00", values: movingAverage(AMOUNT, [18, 18, 18, 18, 18, 38, 60, 190, 102], 10) },
                  ]}
                />
              </Plot>
            </PaneBody>
            <Axis height={128} labels={[[38, "45000"], [68, "30000"], [97, "15000"]]} minor={[53, 83]} />
          </Pane>

          <Pane $h={129}>
            <PaneBody>
              <PaneTitle $h={16}>
                <ChevronDisc />
                <Value $color="#a0a0a0">HSCOL(5)</Value>
                <Value $color="#ffffff">HSCOL: 6.55</Value>
                <Value $color="#ffffff">MAHSL: 2.95</Value>
              </PaneTitle>
              <Plot>
                <BarPlot
                  values={TURNOVER}
                  grid={[37, 74]}
                  averages={[{ color: "#ffffff", values: movingAverage(TURNOVER, [25, 40, 150, 90], 5) }]}
                />
              </Plot>
            </PaneBody>
            <Axis height={128} labels={[[17, "15.00"], [53, "10.00"], [90, "5.00"]]} minor={[35, 72]} />
          </Pane>

          <DateRow>
            <Months>
              {MONTHS.map(([m, w], i) => (
                <Month key={m} $w={w} $first={i === 0}>
                  {m}
                </Month>
              ))}
            </Months>
            <PeriodCell>日线</PeriodCell>
          </DateRow>

          <TabStrip>
            {INDICATORS.map((t) => (
              <IndicatorTab key={t} $han={isHan(t)} $tone={t === "设置" ? "cyan" : "text"}>
                {t}
              </IndicatorTab>
            ))}
            <Spacer />
            <IndicatorTab $han $w={42}>指标B</IndicatorTab>
            <IndicatorTab $han $w={42}>模 板</IndicatorTab>
            <IndicatorTab $w={25} aria-label="放大">+</IndicatorTab>
            <IndicatorTab $w={25} aria-label="缩小">-</IndicatorTab>
          </TabStrip>

          <TableArea>
            <SectorTable>
              <colgroup>
                {COLUMNS.map(([c, w]) => (
                  <col key={c} style={{ width: w }} />
                ))}
              </colgroup>
              <thead>
                <tr>
                  <IndexHead>
                    <FaCog />
                  </IndexHead>
                  <Head $left={7}>
                    <NameHead>
                      名称(15)<span>•</span>
                    </NameHead>
                  </Head>
                  {COLUMNS.slice(2, -1).map(([c]) => (
                    <Head key={c} $left={c === "细分行业" ? 11 : undefined}>
                      {c}
                      {c === "涨幅%" && <SortArrow>↓</SortArrow>}
                    </Head>
                  ))}
                  <th />
                </tr>
              </thead>
              <tbody>
                {SECTORS.map(([name, kind, values, tones], r) => (
                  <tr key={name}>
                    <IndexCell>{r + 1}</IndexCell>
                    <NameCell>
                      {name}
                      <small>({kind})</small>
                    </NameCell>
                    {values.map((v, i) => (
                      <Cell key={i} $tone={TONES[tones[i]]}>
                        {v}
                      </Cell>
                    ))}
                    <td />
                  </tr>
                ))}
              </tbody>
            </SectorTable>
            <ScrollTrack>
              <ScrollButton aria-label="上">▲</ScrollButton>
              <ScrollThumb />
              <ScrollButton $last aria-label="下">▼</ScrollButton>
            </ScrollTrack>
          </TableArea>

          <SectorTabs>
            {RELATED.map((t, i) => (
              <SectorTab key={t} $active={i === 0}>
                {t}
              </SectorTab>
            ))}
          </SectorTabs>

          <FootBar>
            <FootCell>扩展v</FootCell>
            <FootCell $tone="cyan">关联报价</FootCell>
            <FootCell>交易查询</FootCell>
            <FootCell>资金流向</FootCell>
            <FootCell $tone="olive">综合资讯</FootCell>
            <FootCell $tone="olive">板块资讯</FootCell>
            <FootSpacer />
            <FootCell $tone="olive" $tight>图文F10</FootCell>
            <FootCell $tight>侧边栏》</FootCell>
          </FootBar>
        </Left>

        <Quote>
          <QuoteHead>
            <div>
              <QuoteName>
                <b>中材节能</b>603126<sup>R</sup>
              </QuoteName>
              <QuotePrice>
                <strong>7.46</strong>
                <span>0.68</span>
                <span>10.03%</span>
              </QuotePrice>
            </div>
            <IndustryBox href="#industry">
              环境保护<span>-0.06%</span>
            </IndustryBox>
            <Handle aria-label="展开">
              <svg width="12" height="10" viewBox="0 0 12 10" fill="none" stroke={C.red} strokeWidth="1.3">
                <path d="M2 2l4 2.500 4-2.500M3 5l3 2.500L9 5" />
              </svg>
            </Handle>
          </QuoteHead>

          <QuoteBlock $rowH={18} $pad="0" $edge="#e0a020">
            {["卖五", "卖四", "卖三", "卖二", "卖一"].map((t) => (
              <React.Fragment key={t}>
                <Pair>
                  <span>{t}</span>
                </Pair>
                <Amount />
              </React.Fragment>
            ))}
          </QuoteBlock>
          <QuoteBlock $rowH={18} $pad="1px 1px 0 0">
            {[["买一", "7.46", "155800"], ["买二", "7.45", "865"], ["买三", "7.44", "298"], ["买四", "7.43", "1029"], ["买五", "7.42", "171"]].map(
              ([a, b, c]) => (
                <React.Fragment key={a}>
                  <Pair $tone="red">
                    <span>{a}</span>
                    <span>{b}</span>
                  </Pair>
                  <Amount>{c}</Amount>
                </React.Fragment>
              ),
            )}
          </QuoteBlock>
          <QuoteBlock $rowH={19} $pad="1px 1px 0 0">
            <Pair $tone="red"><span>涨停</span><span>7.46</span></Pair>
            <Pair $tone="green"><span>跌停</span><span>6.10</span></Pair>
            <Pair $tone="red"><span>最高</span><Boxed>7.46</Boxed></Pair>
            <Pair $tone="purple"><span>量比</span><span>3.24</span></Pair>
            <Pair $tone="red"><span>最低</span><span>7.28</span></Pair>
            <Pair><span>市值</span><span>45.5亿</span></Pair>
            <Pair $tone="purple"><span>现量</span><span>829</span></Pair>
            <Pair><span>总量</span><span>400108</span></Pair>
            <Pair $tone="red"><span>外盘</span><span>196154</span></Pair>
            <Pair $tone="green"><span>内盘</span><span>203954</span></Pair>
          </QuoteBlock>
          <QuoteBlock $rowH={19} $pad="1px 1px 3px 0">
            <Pair><span>换手</span><span>6.55%</span></Pair>
            <Pair><span>股本</span><span>6.11亿</span></Pair>
            <Pair><span>净资</span><span>3.39</span></Pair>
            <Pair><span>流通</span><span>6.11亿</span></Pair>
            <Pair><span>收益㈢</span><span>0.040</span></Pair>
            <Pair><span>PE(动)</span><span>126.9</span></Pair>
          </QuoteBlock>
          <StatusRow $h={20}>交易状态: 闭市阶段 15:00:03</StatusRow>
          <StatusRow $h={23}>
            主力净额
            <svg width="14" height="14" viewBox="0 0 14 14" fill="none" stroke="#8c8c8c" aria-hidden="true">
              <rect x="2.500" y="1.500" width="11" height="11" rx="2" />
              <path d="M5 4.500h6M5 7.500h6M5 9.500h6" />
            </svg>
            <FlowBar />
            <FlowText>-3283万 -11%</FlowText>
          </StatusRow>
          <TickTable>
            <tbody>
              {TICKS.map(([t, v, n], i) => (
                <tr key={i}>
                  <TickCell $w={50}>{t}</TickCell>
                  <TickCell $w={63} $tone="red">7.46</TickCell>
                  <TickCell $w={66} $tone={t === "15:00" ? "purple" : "olive"}>{v}</TickCell>
                  <TickCell $w={20} $tone="green">{t === "15:00" ? "" : "S"}</TickCell>
                  <TickCell $tone="dim">{n}</TickCell>
                </tr>
              ))}
            </tbody>
          </TickTable>
          <QuoteTabs>
            {["笔", "价", "细", "势", "联", "值", "主", "筹"].map((t, i) => (
              <QuoteTab key={t} $active={i === 0}>
                {t}
              </QuoteTab>
            ))}
          </QuoteTabs>
        </Quote>

        <Info>
          <TradeButtons>
            <TradeButton $tone="red">闪电买入</TradeButton>
            <TradeButton $tone="green">闪电卖出</TradeButton>
            <TradeButton $tone="text">撤单查询</TradeButton>
            <TradeButton $tone="text">条件预警</TradeButton>
          </TradeButtons>
          <InfoTabs>
            <span>603126</span>
            <TextButton $tone="blue">单季</TextButton>
            <TextButton>同季</TextButton>
            <TextButton>财报</TextButton>
            <TextButton>更多..</TextButton>
          </InfoTabs>
          <ProfitChart />
          <InfoBlock $pad="0">
            <Facts
              rows={[
                ["总收入", "14.89亿", "同比%", "-32.65"],
                ["净利润", "2692万", "同比%", "-72.27"],
                ["非经损", "953万", "销售费", "3485万"],
                ["货币金i", "7.15亿", "应收款", "13.16亿"],
              ]}
            />
            <More aria-label="展开">
              <svg width="8" height="8" viewBox="0 0 8 8" fill="none" stroke="#c0c0c0">
                <path d="M1 1l3 5 3-5" />
              </svg>
            </More>
          </InfoBlock>
          <InfoBlock $pad="0 0 3px">
            <Facts
              rows={[
                [<>PE<sup>TTM</sup></>, "62.2", <>PB<sup>MRQ</sup></>, "2.20"],
                ["PEGⁱ", "-1.69", <>PS<sup>TTM</sup></>, "1.94"],
                ["毛利率", "18.99", "净利率", "2.36"],
                [<>ROE<sup>③</sup></>, "1.30%", "负债率", "51.56"],
              ]}
            />
          </InfoBlock>
          <InfoBlock $pad="3px 0">
            <Facts
              rows={[
                ["20日i", "19.6%", "今年来", "12.0%"],
                ["60日", "48.3%", "Beta值", "1.11"],
                ["年最高", "8.24", "年最低", "4.81"],
                ["总市值i", "45.54亿", "流通值i", "45.54亿"],
              ]}
            />
          </InfoBlock>
          <InfoBlock $pad="3px 0">
            <InfoTable>
              <tbody>
                <tr><td>股东</td><td>24-09-30</td><td>24-06-30</td></tr>
                <tr><td>户数</td><td>4.93万</td><td>5.05万</td></tr>
                <tr><td>较上期</td><td>-2.40%</td><td>-4.06%</td></tr>
              </tbody>
            </InfoTable>
          </InfoBlock>
          <InfoBlock $pad="3px 0">
            <News href="#n1" $hot>12月20日股票交易异常波动公告</News>
            <News href="#n2">12月30日召开第3次临时股东会</News>
          </InfoBlock>
          <InfoBlock $pad="3px 0">
            <News href="#n3" $hot>12月19日09:30涨停:中字头,国企...</News>
            <News href="#n4">12月18日09:32涨停:中字头,国企...</News>
          </InfoBlock>
          <InfoBlock $pad="3px 0 6px">
            <Outlook>
              <span>眼光</span>
              <TextButton>今日</TextButton>
              <TextButton $tone="blue">本周</TextButton>
              <TextButton>本月</TextButton>
              <TextButton>本年</TextButton>
            </Outlook>
            <Votes>
              <span><b>看多</b>39人</span>
              <span>29人<i>看空</i></span>
            </Votes>
            <VoteBar>
              <VoteSide>
                <Thumb $color="#e0788c"><ThumbsUp size={13} strokeWidth={2} /></Thumb>57%
              </VoteSide>
              <VoteSide>
                43%<Thumb $color="#78be6e"><ThumbsDown size={13} strokeWidth={2} /></Thumb>
              </VoteSide>
            </VoteBar>
          </InfoBlock>
          <InfoBlock $pad="2px 0 0">
            <InfoRow $cols="60px 1fr auto">
              <Label>法人1<sup>③</sup></Label>
              <span>4家</span>
              <span>3.21亿股&nbsp; 52.6%</span>
            </InfoRow>
          </InfoBlock>
          <InfoBlock $pad="3px 0">
            <InfoRow $cols="110px 103px">
              <Item><Label>分红</Label><span>4.42亿(10)</span></Item>
              <Item><Label>募资</Label><span>2.77亿(1)</span></Item>
            </InfoRow>
          </InfoBlock>
          <InfoBlock $pad="3px 0">
            <InfoRow>
              <Item><Label>融资占比</Label><span>3.35%</span></Item>
              <Item><Label>融券占比</Label><span>0.00%</span></Item>
            </InfoRow>
          </InfoBlock>
          <InfoBlock $pad="4px 0 3px">
            <MarginTable>
              <thead>
                <tr><th>日期</th><th>融资余额</th><th>融券余量</th></tr>
              </thead>
              <tbody>
                {MARGINS.map(([day, sum], i) => (
                  <MarginRow key={day} $hot={i === 0}>
                    <td>{day}</td>
                    <td>{sum}<DownArrow>↓</DownArrow></td>
                    <td>100</td>
                  </MarginRow>
                ))}
              </tbody>
            </MarginTable>
          </InfoBlock>
          <Events>
            <thead>
              <tr><th>日期</th><th>异动类型</th></tr>
            </thead>
            <tbody>
              <tr><td>12-19</td><td>连续三个交易日内涨幅偏...</td></tr>
            </tbody>
          </Events>
        </Info>
      </Columns>
    </Page>
  );
}
